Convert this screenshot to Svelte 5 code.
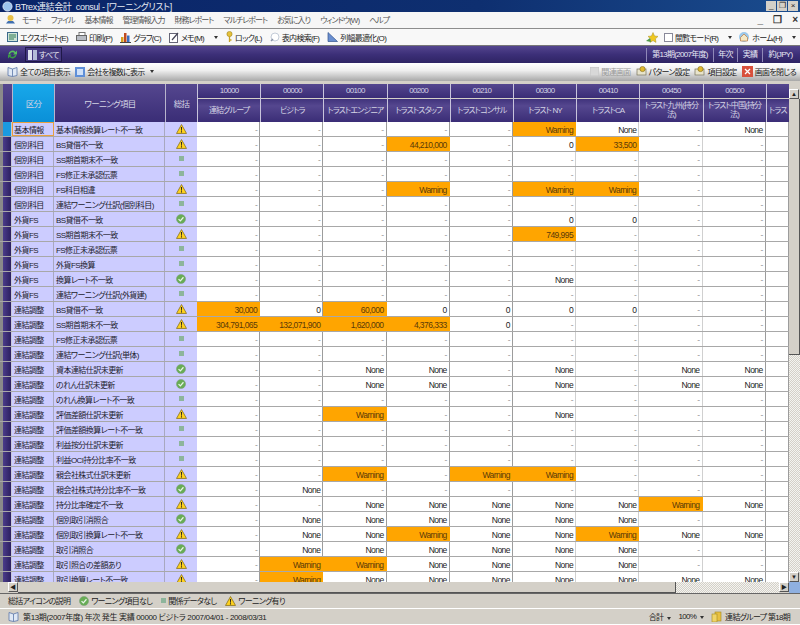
<script lang="ts">
  const menus = ['モード', 'ファイル', '基本情報', '管理情報入力', '財務レポート', 'マルチレポート', 'お気に入り', 'ウィンドウ(W)', 'ヘルプ'];

  const columns = [
    ['10000', '連結グループ'],
    ['00000', 'ビジトラ'],
    ['00100', 'トラストエンジニア'],
    ['00200', 'トラストスタッフ'],
    ['00210', 'トラストコンサル'],
    ['00300', 'トラスト NY'],
    ['00410', 'トラストCA'],
    ['00450', 'トラスト九州(持分法)'],
    ['00500', 'トラスト中国(持分法)'],
    ['', 'トラス'],
  ];

  const D = '-';
  const N = 'None';
  const W = '!Warning';
  const none = [D, D, D, D, D, D, D, D, D];

  // "!" prefix marks an orange cell
  const rows: [string, string, string, string[]][] = [
    ['基本情報', '基本情報換算レート不一致', 'warn', [D, D, D, D, D, W, N, D, N]],
    ['個別科目', 'BS貸借不一致', 'warn', [D, D, D, '!44,210,000', D, '0', '!33,500', D, D]],
    ['個別科目', 'SS期首期末不一致', 'na', none],
    ['個別科目', 'FS修正未承認伝票', 'na', none],
    ['個別科目', 'FS科目相違', 'warn', [D, D, D, W, D, W, W, D, D]],
    ['個別科目', '連結ワーニング仕訳(個別科目)', 'na', none],
    ['外貨FS', 'BS貸借不一致', 'ok', [D, D, D, D, D, '0', '0', D, D]],
    ['外貨FS', 'SS期首期末不一致', 'warn', [D, D, D, D, D, '!749,995', D, D, D]],
    ['外貨FS', 'FS修正未承認伝票', 'na', none],
    ['外貨FS', '外貨FS換算', 'na', none],
    ['外貨FS', '換算レート不一致', 'ok', [D, D, D, D, D, N, D, D, D]],
    ['外貨FS', '連結ワーニング仕訳(外貨建)', 'na', none],
    ['連結調整', 'BS貸借不一致', 'warn', ['!30,000', '0', '!60,000', '0', '0', '0', '0', D, D]],
    ['連結調整', 'SS期首期末不一致', 'warn', ['!304,791,065', '!132,071,900', '!1,620,000', '!4,376,333', '0', D, D, D, D]],
    ['連結調整', 'FS修正未承認伝票', 'na', none],
    ['連結調整', '連結ワーニング仕訳(単体)', 'na', none],
    ['連結調整', '資本連結仕訳未更新', 'ok', [D, D, N, N, D, N, D, N, N]],
    ['連結調整', 'のれん仕訳未更新', 'ok', [D, D, N, N, D, N, D, N, N]],
    ['連結調整', 'のれん換算レート不一致', 'na', none],
    ['連結調整', '評価差額仕訳未更新', 'warn', [D, D, W, D, D, N, D, D, D]],
    ['連結調整', '評価差額換算レート不一致', 'na', none],
    ['連結調整', '利益按分仕訳未更新', 'na', none],
    ['連結調整', '利益OCI持分比率不一致', 'na', none],
    ['連結調整', '親会社株式仕訳未更新', 'warn', [D, D, W, D, W, W, D, D, D]],
    ['連結調整', '親会社株式持分比率不一致', 'ok', [D, N, D, D, D, D, D, D, D]],
    ['連結調整', '持分比率確定不一致', 'warn', [D, D, N, N, N, N, N, W, N]],
    ['連結調整', '個別取引消照合', 'ok', [D, N, N, N, N, N, N, D, D]],
    ['連結調整', '個別取引換算レート不一致', 'warn', [D, N, N, W, N, N, W, N, N]],
    ['連結調整', '取引消照合', 'ok', [D, N, N, N, N, N, N, D, D]],
    ['連結調整', '取引照合の差額あり', 'warn', [D, W, W, N, N, N, N, D, D]],
    ['連結調整', '取引換算レート不一致', 'warn', [D, W, N, N, N, N, N, N, N]],
  ];
</script>

{#snippet warn()}
  <svg class="ico" width="11" height="10" viewBox="0 0 12 11">
    <path d="M6 .6 11.5 10.4H.5Z" fill="#ffd21e" stroke="#8a7420" stroke-width=".9" stroke-linejoin="round" />
    <path d="M5.4 3.4h1.2l-.2 4h-.8ZM5.4 8.1h1.2v1.2H5.4Z" fill="#222" />
  </svg>
{/snippet}

{#snippet ok()}
  <svg class="ico" width="10" height="10" viewBox="0 0 11 11">
    <circle cx="5.5" cy="5.5" r="5" fill="#68ad55" stroke="#7f9f80" stroke-width=".6" />
    <path d="M2.8 5.6 4.8 7.6 8.2 3.6" fill="none" stroke="#e8f4e8" stroke-width="1.4" />
  </svg>
{/snippet}

{#snippet na()}
  <svg class="ico" width="5" height="5" viewBox="0 0 5 5"><rect width="5" height="5" fill="#8db59c" /></svg>
{/snippet}

{#snippet book()}
  <svg class="ico" width="11" height="11" viewBox="0 0 11 11">
    <path d="M1 1.5 5.5 3 10 1.5V9.5L5.5 10.5 1 9.5Z" fill="#dfe8f5" stroke="#5b76a8" stroke-width=".8" />
    <path d="M5.5 3V10.5" stroke="#5b76a8" stroke-width=".8" />
  </svg>
{/snippet}

{#snippet gear()}
  <svg class="ico" width="11" height="11" viewBox="0 0 11 11">
    <rect x="1" y="3" width="9" height="6" fill="#e8e4cc" stroke="#77735c" stroke-width=".7" />
    <circle cx="6.5" cy="3" r="2.6" fill="#e0b830" stroke="#7f6a18" stroke-width=".6" />
  </svg>
{/snippet}

<div class="window">
  <div class="titlebar">
    <svg class="ico" width="11" height="11" viewBox="0 0 11 11">
      <circle cx="5.5" cy="5.5" r="4.6" fill="#9cc4ee" stroke="#e8f0fa" stroke-width=".8" />
    </svg>
    <span class="title">BTrex連結会計 &nbsp;consul - [ワーニングリスト]</span>
    <div class="winbtns">
      <span>_</span><span>❐</span><span>×</span>
    </div>
  </div>

  <div class="menubar">
    <svg class="ico mode-ico" width="11" height="11" viewBox="0 0 11 11">
      <path d="M1 9.5h9L8 7H3Z" fill="#3f6fb0" /><circle cx="5.5" cy="4" r="3" fill="#e8c048" />
    </svg>
    {#each menus as m}
      <span class="menu">{m}</span>
    {/each}
    <div class="mdi"><span>_</span><span>❐</span><span>×</span></div>
  </div>

  <div class="toolbar">
    <span class="tool"><svg class="ico" width="11" height="10" viewBox="0 0 11 10"><rect x=".5" y=".5" width="10" height="9" fill="#cfe4d8" stroke="#3c6a8c" /><path d="M2 3h7M2 5h7M2 7h5" stroke="#2f7a52" /></svg>エクスポート(E)</span>
    <span class="tool"><svg class="ico" width="11" height="10" viewBox="0 0 11 10"><rect x="3" y=".5" width="6" height="3" fill="#fff" stroke="#777" /><rect x=".5" y="3.5" width="10" height="5" fill="#b8bcc4" stroke="#666" /></svg>印刷(P)</span>
    <span class="tool"><svg class="ico" width="11" height="11" viewBox="0 0 11 11"><path d="M1 10V5h2.5v5Z" fill="#d8a020" /><path d="M4 10V1h2.5v9Z" fill="#c04a20" /><path d="M7 10V3.5h2.5V10Z" fill="#3a6fc0" /><path d="M0 10.5h11" stroke="#444" /></svg>グラフ(C)</span>
    <span class="tool"><svg class="ico" width="10" height="11" viewBox="0 0 10 11"><rect x=".5" y="1.5" width="8" height="9" fill="#fff" stroke="#667" /><path d="M3 8 9 1" stroke="#445" stroke-width="1.2" /></svg>メモ(M)<i class="arrow"></i></span>
    <span class="tool"><svg class="ico" width="7" height="12" viewBox="0 0 7 12"><circle cx="3.5" cy="3" r="2.6" fill="#e6c23c" stroke="#a08420" stroke-width=".6" /><path d="M3.5 5v6M3.5 9h2" stroke="#c8a428" stroke-width="1.3" /></svg>ロック(L)</span>
    <span class="tool"><svg class="ico" width="10" height="10" viewBox="0 0 10 10"><circle cx="5" cy="5" r="4" fill="#fff" stroke="#c4ccd8" /><path d="M1 9 3 7" stroke="#8a94a8" stroke-width="1.4" /></svg>表内検索(F)</span>
    <span class="tool"><svg class="ico" width="11" height="10" viewBox="0 0 11 10"><path d="M1 .5V9.5H10.5Z" fill="#6a8fd0" stroke="#34548e" stroke-width=".7" /></svg>列幅最適化(O)</span>
    <div class="tool-right">
      <svg class="ico" width="12" height="11" viewBox="0 0 12 11"><path d="M7 .5 8.5 4 12 4.4 9.4 6.8 10 10.4 7 8.6 4 10.4 4.6 6.8 2 4.4 5.5 4Z" fill="#f0c820" stroke="#a89020" stroke-width=".5" /><path d="M0 9 4 6l1 4Z" fill="#4f9a4a" /></svg>
      <span class="check"></span>
      <span>閲覧モード(R)</span><i class="arrow"></i>
      <svg class="ico home" width="12" height="12" viewBox="0 0 12 12"><circle cx="6" cy="6" r="5" fill="#9cc8ea" /><path d="M2.5 6.5 6 3l3.5 3.5V10h-7Z" fill="#f4e8c4" stroke="#b86a2c" stroke-width=".6" /></svg>
      <span>ホーム(H)</span><i class="arrow"></i>
    </div>
  </div>

  <div class="purplebar">
    <svg class="ico refresh" width="11" height="11" viewBox="0 0 11 11">
      <path d="M1.5 5a4 4 0 0 1 7-2L10 1.5V5.5H6L7.5 4A2.6 2.6 0 0 0 3 5.5Z" fill="#58c060" />
      <path d="M9.5 6a4 4 0 0 1-7 2L1 9.5V5.5h4L3.5 7A2.6 2.6 0 0 0 8 5.5Z" fill="#3c9a48" />
    </svg>
    <span class="all-btn">
      <svg class="ico" width="9" height="10" viewBox="0 0 9 10"><rect width="4" height="10" fill="#dfe3f0" /><rect x="5" width="4" height="10" fill="#b4bcd8" /></svg>
      <span>すべて</span>
    </span>
    <div class="period">
      <span class="p1">第13期(2007年度)</span><span class="p2">年次</span><span class="p3">実績</span><span class="p4">約(JPY)</span>
    </div>
  </div>

  <div class="graybar">
    <span class="tool">{@render book()}全ての項目表示</span>
    <span class="tool"><svg class="ico" width="10" height="10" viewBox="0 0 10 10"><rect width="10" height="10" fill="#5f8fd8" /><rect x="2" y="2" width="6" height="6" fill="#cfe0f8" /></svg>会社を複数に表示<i class="arrow small"></i></span>
    <div class="gray-right">
      <span class="tool disabled"><svg class="ico" width="9" height="9" viewBox="0 0 9 9"><rect width="9" height="9" fill="#d8d8d8" stroke="#c4c4c4" /></svg>関連画面</span>
      <span class="tool">{@render gear()}パターン設定</span>
      <span class="tool">{@render gear()}項目設定</span>
      <span class="tool"><svg class="ico" width="11" height="11" viewBox="0 0 11 11"><rect width="11" height="11" fill="#d8503c" /><path d="M3 3 8 8M8 3 3 8" stroke="#fff" stroke-width="1.3" /></svg>画面を閉じる</span>
    </div>
  </div>

  <div class="main">
    <div class="table-view">
      <div class="head">
        <div class="cell-head marker-head"></div>
        <div class="cell-head kubun">区分</div>
        <div class="cell-head item">ワーニング項目</div>
        <div class="cell-head sum">総括</div>
        {#each columns as c}
          <div class="col-head">
            <div class="code">{c[0]}</div>
            <div class="name">{c[1]}</div>
          </div>
        {/each}
      </div>

      {#each rows as r, i}
        <div class="row">
          <div class="marker" class:current={i === 0}></div>
          <div class="label group" class:current={i === 0}>{r[0]}</div>
          <div class="label">{r[1]}</div>
          <div class="label state">
            {#if r[2] === 'warn'}{@render warn()}{:else if r[2] === 'ok'}{@render ok()}{:else}{@render na()}{/if}
          </div>
          {#each r[3] as v, j}
            <div class="val" class:hot={v[0] === '!'} class:dash={v === '-'} class:soft={j === 5 || j === 6 || j === 7}>
              {v[0] === '!' ? v.slice(1) : v}
            </div>
          {/each}
          <div class="val"></div>
        </div>
      {/each}
    </div>

    <div class="vscroll">
      <span class="sbtn">▲</span>
      <div class="vthumb"></div>
      <div class="track"></div>
      <span class="sbtn">▼</span>
    </div>
  </div>

  <div class="hscroll">
    <span class="sbtn">◀</span>
    <div class="hthumb"></div>
    <div class="track"></div>
    <span class="sbtn">▶</span>
    <span class="corner"></span>
  </div>

  <div class="legend">
    <span>総括アイコンの説明</span>
    <span class="leg">{@render ok()}ワーニング項目なし</span>
    <span class="leg">{@render na()}関係データなし</span>
    <span class="leg">{@render warn()}ワーニング有り</span>
  </div>

  <div class="statusbar">
    {@render book()}
    <span class="status-text">第13期(2007年度) 年次 発生 実績 00000 ビジトラ 2007/04/01 - 2008/03/31</span>
    <div class="status-right">
      <span>合計<i class="arrow"></i></span>
      <span>100%<i class="arrow"></i></span>
      <svg class="ico" width="11" height="11" viewBox="0 0 11 11"><rect x="4" y="1" width="6" height="9" fill="#e8c040" stroke="#a08820" stroke-width=".6" /><rect x="1" y="3" width="5" height="8" fill="#f0d468" stroke="#a08820" stroke-width=".6" /></svg>
      <span>連結グループ 第18期</span>
    </div>
  </div>
</div>

<style>
  :global(body) {
    margin: 0;
    background: #d4d0c8;
  }

  .window {
    width: 800px;
    height: 625px;
    display: flex;
    flex-direction: column;
    overflow: hidden;
    background: #d4d0c8;
    color: #222;
    font-family: "Liberation Sans", "Noto Sans CJK JP", sans-serif;
    font-size: 8px;
    font-feature-settings: "palt";
    letter-spacing: -0.7px;
  }

  .ico {
    flex: none;
    display: block;
  }

  .arrow {
    display: inline-block;
    width: 0;
    height: 0;
    margin-left: 8px;
    border: 2.5px solid transparent;
    border-top: 3px solid #333;
    border-bottom: 0;
    vertical-align: middle;
  }

  .arrow.small {
    margin-left: 3px;
  }

  .titlebar {
    height: 12px;
    display: flex;
    align-items: center;
    gap: 2px;
    padding-left: 2px;
    background: linear-gradient(90deg, #0a2468, #0e2f70 60%, #1a4c8e);
    color: #e8ecf4;
    font-size: 9px;
    letter-spacing: -0.35px;
  }

  .winbtns {
    margin-left: auto;
    margin-right: 2px;
    display: flex;
    gap: 1px;
  }

  .winbtns span {
    width: 10px;
    height: 10px;
    background: #d4d0c8;
    color: #222;
    font-size: 8px;
    line-height: 10px;
    text-align: center;
  }

  .menubar {
    height: 16px;
    display: flex;
    align-items: center;
    padding-left: 5px;
    background: #f6f6f6;
    border-bottom: 1px solid #8c8c8c;
    color: #555;
    letter-spacing: -1px;
  }

  .mode-ico {
    margin-right: 6px;
  }

  .menu {
    margin-right: 10px;
  }

  .mdi {
    margin-left: auto;
    margin-right: 3px;
    display: flex;
    gap: 11px;
    font-size: 10px;
    font-weight: bold;
    color: #333;
  }

  .toolbar {
    height: 17px;
    display: flex;
    align-items: center;
    gap: 8px;
    padding-left: 7px;
    background: #f8f8f8;
    border-bottom: 1px solid #777;
  }

  .tool {
    display: flex;
    align-items: center;
    gap: 2px;
    white-space: nowrap;
  }

  .tool-right {
    margin-left: auto;
    margin-right: 4px;
    display: flex;
    align-items: center;
    gap: 2px;
  }

  .check {
    width: 7px;
    height: 7px;
    margin-left: 4px;
    background: #fff;
    border: 1px solid #889;
  }

  .home {
    margin-left: 4px;
  }

  .purplebar {
    height: 17px;
    display: flex;
    align-items: center;
    padding-left: 7px;
    background: linear-gradient(#54468f, #3c2f78 50%, #2e2464);
    color: #e8e8f4;
  }

  .refresh {
    margin-right: 7px;
  }

  .all-btn {
    display: flex;
    align-items: center;
    gap: 2px;
    width: 33px;
    height: 13px;
    padding-left: 2px;
    border: 1px solid #1f1848;
    background: #44387f;
    white-space: nowrap;
  }

  .period {
    margin-left: auto;
    margin-right: 2px;
    display: flex;
    height: 14px;
    line-height: 14px;
    text-align: center;
    white-space: nowrap;
  }

  .period span {
    border-left: 1px solid #8f88b8;
    box-sizing: border-box;
  }

  .p1 { width: 67px; }
  .p2 { width: 24px; }
  .p3 { width: 25px; }
  .p4 { width: 36px; }

  .graybar {
    height: 18px;
    display: flex;
    align-items: center;
    gap: 5px;
    padding-left: 7px;
    background: linear-gradient(#ffffff, #f0f0f0 40%, #a8a8a8);
  }

  .gray-right {
    margin-left: auto;
    margin-right: 4px;
    display: flex;
    gap: 5px;
  }

  .disabled {
    color: #999;
  }

  .main {
    flex: none;
    height: 498px;
    margin-top: 3px;
    display: flex;
    overflow: hidden;
  }

  .table-view {
    width: 789px;
    overflow: hidden;
  }

  .head,
  .row {
    display: grid;
    grid-template-columns: 12px 42px 111px 32px repeat(9, 63.2px) 1fr;
    box-sizing: border-box;
  }

  .head {
    height: 38px;
    color: #d4d4e4;
    white-space: nowrap;
  }

  .cell-head {
    display: flex;
    align-items: center;
    justify-content: center;
    box-sizing: border-box;
    background: linear-gradient(#55478f, #3a2d76);
    border-left: 1px solid #b8b4cc;
    font-size: 8.5px;
  }

  .marker-head {
    border-left: 3px solid #8a8a8a;
  }

  .kubun {
    background: linear-gradient(#18a8ea, #0a90d8);
  }

  .col-head {
    display: flex;
    flex-direction: column;
    gap: 1px;
    min-width: 0;
    border-left: 1px solid #c8c4dc;
    overflow: hidden;
  }

  .code,
  .name {
    display: flex;
    align-items: center;
    justify-content: center;
    background: linear-gradient(#55478f, #3a2d76);
    text-align: center;
  }

  .code {
    height: 14px;
    flex: none;
  }

  .name {
    flex: 1;
    white-space: normal;
    line-height: 9px;
    padding: 0 1px;
    letter-spacing: -0.85px;
    background: linear-gradient(#40337c, #55478f 30%, #3a2d76);
  }

  .row {
    height: 15px;
    border-bottom: 1px solid #a8a8a8;
  }

  .marker {
    border-left: 3px solid #8a8a8a;
    border-right: 1px solid #c8c8d8;
    background: linear-gradient(90deg, #4a3c8a, #2c2060);
  }

  .marker.current {
    background: #1a9ae0;
  }

  .label {
    display: flex;
    align-items: flex-end;
    padding-left: 2px;
    background: #ccccff;
    border-right: 1px solid #a8a8c0;
    white-space: nowrap;
    overflow: hidden;
    line-height: 11px;
    color: #1c1c2c;
    letter-spacing: -0.55px;
  }

  .group.current {
    outline: 1px solid #e8a040;
    outline-offset: -1px;
  }

  .state {
    align-items: center;
    justify-content: center;
    padding-left: 0;
    border-right: 0;
  }

  .val {
    display: flex;
    align-items: flex-end;
    justify-content: flex-end;
    padding-right: 2px;
    background: #fff;
    border-right: 1px solid #9c9c9c;
    font-size: 8.5px;
    letter-spacing: -0.55px;
    line-height: 11px;
    overflow: hidden;
  }

  .val.soft {
    border-right-color: #d0d0d0;
  }

  .val.hot {
    background: #ffa500;
    color: #5a3a08;
    border-right-color: #ffa500;
  }

  .val.dash {
    color: #999;
  }

  .sbtn {
    flex: none;
    width: 10px;
    height: 10px;
    background: #d4d0c8;
    border: 1px solid;
    border-color: #fff #555 #555 #fff;
    box-sizing: border-box;
    color: #222;
    font-size: 6px;
    line-height: 8px;
    text-align: center;
    letter-spacing: 0;
  }

  .track {
    flex: 1;
    background: repeating-conic-gradient(#d4d0c8 0 25%, #f4f4f0 0 50%) 0 0 / 2px 2px;
  }

  .vscroll {
    width: 11px;
    display: flex;
    flex-direction: column;
    padding-top: 5px;
    box-sizing: border-box;
  }

  .vthumb {
    flex: none;
    height: 255px;
    background: #d4d0c8;
    border-bottom: 1px solid #555;
    border-right: 1px solid #555;
  }

  .hscroll {
    height: 11px;
    display: flex;
    padding-left: 8px;
    border-bottom: 1px solid #666;
  }

  .hthumb {
    flex: none;
    width: 657px;
    background: #d4d0c8;
    border-right: 1px solid #555;
    border-bottom: 1px solid #555;
  }

  .corner {
    width: 11px;
    background: #8fb0e0;
  }

  .legend {
    height: 15px;
    display: flex;
    align-items: center;
    gap: 9px;
    padding-left: 8px;
    border-bottom: 1px solid #fff;
  }

  .leg {
    display: flex;
    align-items: center;
    gap: 2px;
  }

  .statusbar {
    height: 15px;
    display: flex;
    align-items: center;
    gap: 4px;
    padding: 0 10px 0 8px;
    border-bottom: 1px solid #fff;
  }

  .status-text {
    letter-spacing: -0.35px;
  }

  .status-right {
    margin-left: auto;
    display: flex;
    align-items: center;
    gap: 3px;
  }

  .status-right .arrow {
    margin: 0 4px;
  }
</style>
